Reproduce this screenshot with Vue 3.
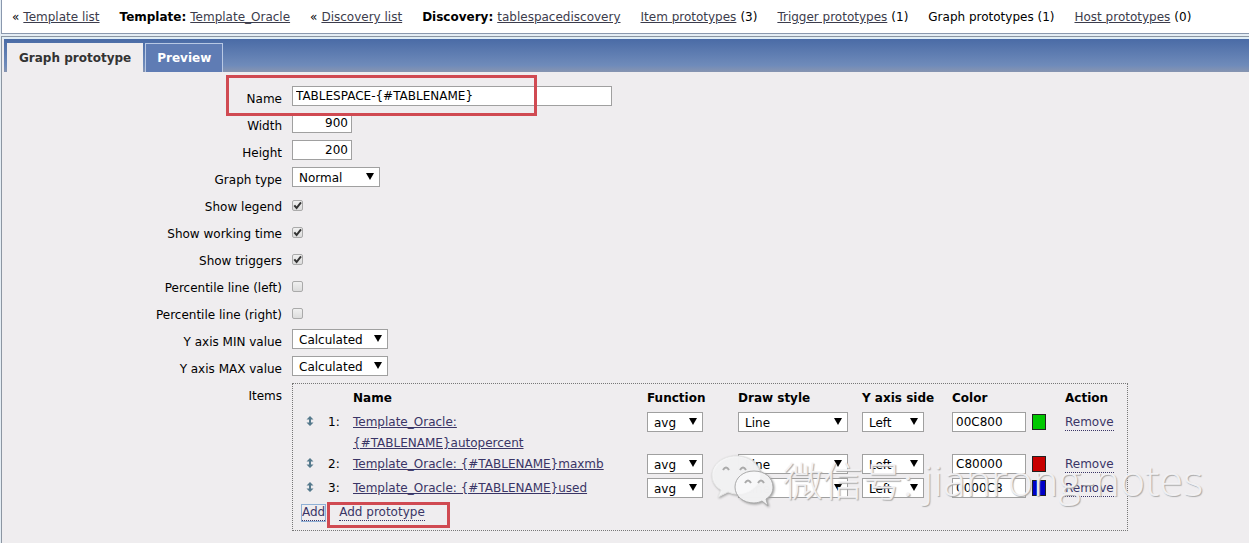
<script setup>
import { reactive } from 'vue'

const crumbs = [
  { pre: '«', link: 'Template list' },
  { bold: 'Template:', link: 'Template_Oracle' },
  { pre: '«', link: 'Discovery list' },
  { bold: 'Discovery:', link: 'tablespacediscovery' },
  { link: 'Item prototypes', post: '(3)' },
  { link: 'Trigger prototypes', post: '(1)' },
  { text: 'Graph prototypes (1)' },
  { link: 'Host prototypes', post: '(0)' }
]

const form = reactive({
  name: 'TABLESPACE-{#TABLENAME}',
  width: '900',
  height: '200',
  type: 'Normal',
  ymin: 'Calculated',
  ymax: 'Calculated'
})

const checks = reactive([
  { id: 'legend', label: 'Show legend', on: true },
  { id: 'work', label: 'Show working time', on: true },
  { id: 'triggers', label: 'Show triggers', on: true },
  { id: 'pleft', label: 'Percentile line (left)', on: false },
  { id: 'pright', label: 'Percentile line (right)', on: false }
])

const items = reactive([
  { name: 'Template_Oracle: {#TABLENAME}autopercent', color: '00C800' },
  { name: 'Template_Oracle: {#TABLENAME}maxmb', color: 'C80000' },
  { name: 'Template_Oracle: {#TABLENAME}used', color: '0000C8' }
])
</script>

<template>
  <div class="page">
    <nav class="crumbs">
      <span v-for="(c, i) in crumbs" :key="i" class="crumb">
        <span v-if="c.pre">{{ c.pre }}</span>
        <b v-if="c.bold">{{ c.bold }}</b>
        <a v-if="c.link" href="#">{{ c.link }}</a>
        <span v-if="c.post">{{ c.post }}</span>
        <span v-if="c.text">{{ c.text }}</span>
      </span>
    </nav>

    <main class="panel">
      <div class="tabs">
        <button type="button" class="tab active">Graph prototype</button>
        <button type="button" class="tab">Preview</button>
      </div>

      <form class="form" @submit.prevent>
        <div class="row name-row">
          <label for="name">Name</label>
          <div><input id="name" v-model="form.name" class="text long" type="text" /></div>
          <i class="mark mark-name"></i>
        </div>
        <div class="row">
          <label for="width">Width</label>
          <div><input id="width" v-model="form.width" class="text num" type="text" /></div>
        </div>
        <div class="row">
          <label for="height">Height</label>
          <div><input id="height" v-model="form.height" class="text num" type="text" /></div>
        </div>
        <div class="row">
          <label for="type">Graph type</label>
          <div><span class="select w88"><select id="type" v-model="form.type"><option>Normal</option></select></span></div>
        </div>
        <div v-for="c in checks" :key="c.id" class="row">
          <label :for="c.id">{{ c.label }}</label>
          <div class="check">
            <input :id="c.id" v-model="c.on" type="checkbox" />
            <svg v-if="c.on" viewBox="0 0 11 11"><path d="M2.3 5.3 L4.6 8 L9 2.4" /></svg>
          </div>
        </div>
        <div class="row">
          <label for="ymin">Y axis MIN value</label>
          <div><span class="select w96"><select id="ymin" v-model="form.ymin"><option>Calculated</option></select></span></div>
        </div>
        <div class="row">
          <label for="ymax">Y axis MAX value</label>
          <div><span class="select w96"><select id="ymax" v-model="form.ymax"><option>Calculated</option></select></span></div>
        </div>
        <div class="row items-row">
          <span class="label">Items</span>
          <div class="items">
            <table>
              <colgroup>
                <col class="c-drag" /><col class="c-no" /><col class="c-name" /><col class="c-fn" />
                <col class="c-draw" /><col class="c-side" /><col class="c-color" /><col class="c-act" />
              </colgroup>
              <thead>
                <tr>
                  <th></th><th></th><th>Name</th><th>Function</th><th>Draw style</th>
                  <th>Y axis side</th><th>Color</th><th>Action</th>
                </tr>
              </thead>
              <tbody>
                <tr v-for="(it, i) in items" :key="i">
                  <td class="drag">
                    <svg viewBox="0 0 8 10"><path d="M4 0 L7.5 3.5 H5 V6.5 H7.5 L4 10 L0.5 6.5 H3 V3.5 H0.5 Z" /></svg>
                  </td>
                  <td>{{ i + 1 }}:</td>
                  <td class="name"><a href="#">{{ it.name }}</a></td>
                  <td><span class="select w56"><select aria-label="Function"><option>avg</option></select></span></td>
                  <td><span class="select w110"><select aria-label="Draw style"><option>Line</option></select></span></td>
                  <td><span class="select w62"><select aria-label="Y axis side"><option>Left</option></select></span></td>
                  <td>
                    <div class="color">
                      <input v-model="it.color" class="text hex" type="text" aria-label="Color" />
                      <span class="swatch" :style="{ background: '#' + it.color }"></span>
                    </div>
                  </td>
                  <td><button type="button" class="act">Remove</button></td>
                </tr>
              </tbody>
            </table>
            <div class="adds">
              <button type="button" class="act add">Add</button>
              <button type="button" class="act">Add prototype</button>
              <i class="mark mark-add"></i>
            </div>
            <div class="watermark">
              <svg viewBox="0 0 64 56">
                <g class="bubble">
                  <path d="M25 4 C11 4 1 13 1 23 C1 30 5 35 10 38 L7 45 L17 40 C20 41 22 42 25 42 C39 42 49 33 49 23 C49 13 39 4 25 4 Z" />
                  <path class="eye" d="M12 18 q3 -5 6 0 M29 18 q3 -5 6 0" />
                  <path class="front" d="M43 19 C32 19 24 26 24 35 C24 44 32 51 43 51 C46 51 49 50 51 49 L57 54 L55 47 C60 44 62 40 62 35 C62 26 54 19 43 19 Z" />
                  <path class="eye" d="M34 31 q3 -5 6 0 M47 31 q3 -5 6 0" />
                </g>
              </svg>
              <span>微信号: <span class="latin">jianrong-notes</span></span>
            </div>
          </div>
        </div>
      </form>
    </main>
  </div>
</template>

<style>
body { background: #fff; }
</style>

<style scoped>
* { box-sizing: border-box; }
.page {
  min-height: 100vh;
  display: flex;
  flex-direction: column;
  gap: 2px;
  padding-left: 1px;
  background: #e4edf4;
  font: 12px/18px "DejaVu Sans", Verdana, sans-serif;
  color: #000;
  overflow: hidden;
}
.crumbs {
  display: flex;
  gap: 20px;
  padding: 8px 0 7px 10px;
  background: #fff;
  border-left: 1px solid #8a98ae;
  border-bottom: 1px solid #8a98ae;
  white-space: nowrap;
}
.crumb { display: flex; gap: 4px; }
.crumbs a { color: #3c3c4c; }
.panel {
  flex: 1;
  padding: 2px 0 0 2px;
  background: #efedef;
  border-left: 1px solid #8c96a2;
  border-top: 1px solid #8c96a2;
  box-shadow: inset 0 2px #e0eef6;
}
.tabs {
  display: flex;
  gap: 2px;
  height: 33px;
  padding: 4px 0 0 3px;
  background: linear-gradient(#4a6ba6, #6f8bba 80%, #8795b0);
}
.tab {
  padding: 0 11px;
  border: 1px solid #b8c8e4;
  border-bottom: 0;
  background: #5f7cb4;
  color: #fff;
  font: bold 12px/28px "DejaVu Sans", sans-serif;
}
.tab.active { background: #efedef; border-color: #efedef; color: #333; }
.form { padding-top: 11px; }
.row {
  position: relative;
  display: grid;
  grid-template-columns: 278px minmax(0, 1fr);
  column-gap: 10px;
  height: 27px;
}
.name-row { z-index: 1; }
.row > label, .label { text-align: right; padding-top: 7px; }
.row > div { padding-top: 3px; }
.text, select {
  display: block;
  height: 20px;
  border: 1px solid #a0a0a0;
  background: #fff;
  color: #000;
  font: 12px/18px "DejaVu Sans", sans-serif;
  border-radius: 0;
  padding: 0 3px;
}
.long { width: 320px; }
.num { width: 60px; text-align: right; }
.hex { width: 74px; }
.select { position: relative; display: block; }
.select::after {
  content: "";
  position: absolute;
  right: 6px;
  top: 6px;
  border: 4px solid transparent;
  border-top: 7px solid #000;
  border-bottom: 0;
  pointer-events: none;
}
select { appearance: none; width: 100%; padding: 1px 6px 0; }
.w56 { width: 56px; }
.w62 { width: 62px; }
.w88 { width: 88px; }
.w96 { width: 96px; }
.w110 { width: 110px; }
.row > .check { position: relative; padding-top: 9px; }
.check input {
  appearance: none;
  display: block;
  margin: 0;
  width: 11px;
  height: 11px;
  border: 1px solid #aaa;
  border-radius: 2px;
  background: linear-gradient(#f0f0f0, #dcdcdc);
}
.check svg { position: absolute; left: 0; top: 9px; width: 11px; height: 11px; pointer-events: none; }
.check path { fill: none; stroke: #333; stroke-width: 2; }
.items-row { height: auto; }
.row > .items {
  position: relative;
  max-width: 836px;
  margin-top: 3px;
  padding: 4px 0 9px 9px;
  border: 1px dotted #777;
}
table { border-collapse: collapse; table-layout: fixed; width: 824px; }
th, td { padding: 0; text-align: left; vertical-align: top; line-height: 21px; }
th { height: 24px; line-height: 20px; }
td { height: 24px; }
.c-drag { width: 26px; }
.c-no { width: 25px; }
.c-name { width: 294px; }
.c-fn { width: 91px; }
.c-draw { width: 124px; }
.c-side { width: 90px; }
.c-color { width: 113px; }
.drag svg { display: block; width: 8px; height: 10px; margin: 4px 0 0 4px; fill: #55798c; }
.name { padding-right: 20px; }
.name a { color: #3a3566; }
.color { display: flex; align-items: center; gap: 6px; }
.swatch { width: 14px; height: 16px; border: 1px solid #222; }
.act {
  padding: 0;
  border: 0;
  border-bottom: 1px dotted #3a3566;
  background: none;
  color: #3a3566;
  font: 12px/15px "DejaVu Sans", sans-serif;
}
.adds { position: relative; display: flex; gap: 14px; padding-top: 3px; }
.add { outline: 1px solid #8fb0d6; }
.mark { position: absolute; border: 3px solid #d04a52; pointer-events: none; }
.mark-name { left: 222px; top: -8px; width: 311px; height: 41px; }
.mark-add { left: 25px; top: 0; width: 123px; height: 26px; }
.watermark {
  position: absolute;
  left: 418px;
  top: 68px;
  display: flex;
  align-items: center;
  gap: 8px;
  color: rgba(244, 243, 245, 0.95);
  font: 300 40px/54px Lato, "Noto Sans CJK SC", sans-serif;
  text-shadow: 1px 1px 1px #aaa;
  white-space: nowrap;
  pointer-events: none;
}
.latin { font-family: "Open Sans", sans-serif; font-size: 43px; }
.watermark svg { width: 64px; height: 56px; filter: drop-shadow(1px 1px 1px #999); }
.bubble path { fill: rgba(250, 249, 251, 0.9); stroke: #e4e4e4; }
.bubble .front { stroke: #aaa; }
.bubble .eye { fill: none; stroke: #aaa; stroke-width: 2; }
</style>
